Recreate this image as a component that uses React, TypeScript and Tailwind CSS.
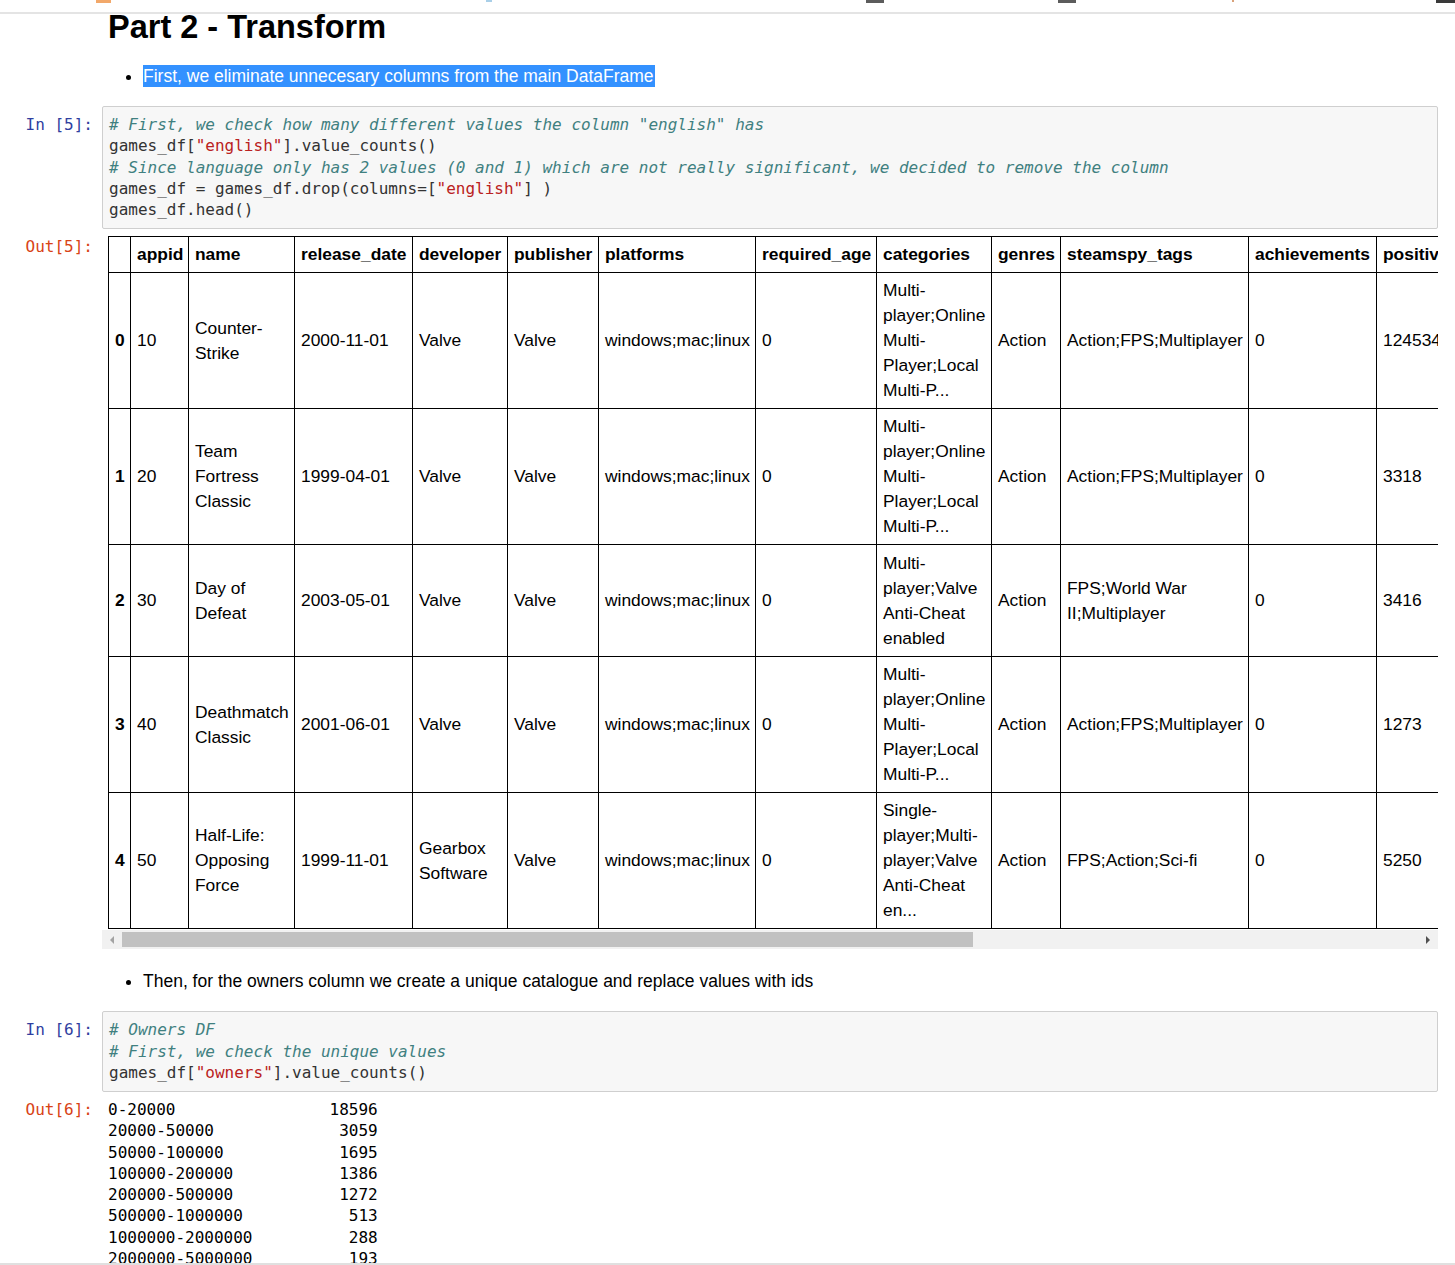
import React from "react";

const sans = "font-['Liberation_Sans',Arial,sans-serif]";
const mono = "font-['DejaVu_Sans_Mono',monospace] text-[16px] leading-[21.25px]";

type Tok = { t: string; c?: string };

const comment = "italic text-[#408080]";
const str = "text-[#ba2121]";

const cell5: Tok[][] = [
  [{ t: '# First, we check how many different values the column "english" has', c: comment }],
  [{ t: "games_df[" }, { t: '"english"', c: str }, { t: "].value_counts()" }],
  [
    {
      t: "# Since language only has 2 values (0 and 1) which are not really significant, we decided to remove the column",
      c: comment,
    },
  ],
  [{ t: "games_df = games_df.drop(columns=[" }, { t: '"english"', c: str }, { t: "] )" }],
  [{ t: "games_df.head()" }],
];

const cell6: Tok[][] = [
  [{ t: "# Owners DF", c: comment }],
  [{ t: "# First, we check the unique values", c: comment }],
  [{ t: "games_df[" }, { t: '"owners"', c: str }, { t: "].value_counts()" }],
];

const columns = [
  { label: "", w: "w-[22px]" },
  { label: "appid", w: "w-[58px]" },
  { label: "name", w: "w-[106px]" },
  { label: "release_date", w: "w-[118px]" },
  { label: "developer", w: "w-[95px]" },
  { label: "publisher", w: "w-[91px]" },
  { label: "platforms", w: "w-[157px]" },
  { label: "required_age", w: "w-[121px]" },
  { label: "categories", w: "w-[115px]" },
  { label: "genres", w: "w-[69px]" },
  { label: "steamspy_tags", w: "w-[188px]" },
  { label: "achievements", w: "w-[128px]" },
  { label: "positive_ratings", w: "w-[150px]" },
  { label: "negative_ratings", w: "w-[150px]" },
];

const onlineCats = ["Multi-", "player;Online", "Multi-", "Player;Local", "Multi-P..."];

const rows = [
  {
    idx: "0",
    h: "h-[136px]",
    cells: [
      ["10"],
      ["Counter-", "Strike"],
      ["2000-11-01"],
      ["Valve"],
      ["Valve"],
      ["windows;mac;linux"],
      ["0"],
      onlineCats,
      ["Action"],
      ["Action;FPS;Multiplayer"],
      ["0"],
      ["124534"],
      ["3339"],
    ],
  },
  {
    idx: "1",
    h: "h-[136px]",
    cells: [
      ["20"],
      ["Team", "Fortress", "Classic"],
      ["1999-04-01"],
      ["Valve"],
      ["Valve"],
      ["windows;mac;linux"],
      ["0"],
      onlineCats,
      ["Action"],
      ["Action;FPS;Multiplayer"],
      ["0"],
      ["3318"],
      ["633"],
    ],
  },
  {
    idx: "2",
    h: "h-[112px]",
    cells: [
      ["30"],
      ["Day of", "Defeat"],
      ["2003-05-01"],
      ["Valve"],
      ["Valve"],
      ["windows;mac;linux"],
      ["0"],
      ["Multi-", "player;Valve", "Anti-Cheat", "enabled"],
      ["Action"],
      ["FPS;World War", "II;Multiplayer"],
      ["0"],
      ["3416"],
      ["398"],
    ],
  },
  {
    idx: "3",
    h: "h-[136px]",
    cells: [
      ["40"],
      ["Deathmatch", "Classic"],
      ["2001-06-01"],
      ["Valve"],
      ["Valve"],
      ["windows;mac;linux"],
      ["0"],
      onlineCats,
      ["Action"],
      ["Action;FPS;Multiplayer"],
      ["0"],
      ["1273"],
      ["267"],
    ],
  },
  {
    idx: "4",
    h: "h-[136px]",
    cells: [
      ["50"],
      ["Half-Life:", "Opposing", "Force"],
      ["1999-11-01"],
      ["Gearbox", "Software"],
      ["Valve"],
      ["windows;mac;linux"],
      ["0"],
      ["Single-", "player;Multi-", "player;Valve", "Anti-Cheat", "en..."],
      ["Action"],
      ["FPS;Action;Sci-fi"],
      ["0"],
      ["5250"],
      ["288"],
    ],
  },
];

const owners = [
  ["0-20000", "18596"],
  ["20000-50000", "3059"],
  ["50000-100000", "1695"],
  ["100000-200000", "1386"],
  ["200000-500000", "1272"],
  ["500000-1000000", "513"],
  ["1000000-2000000", "288"],
  ["2000000-5000000", "193"],
  ["5000000-10000000", "46"],
  ["10000000-20000000", "21"],
];

function Prompt({ text, out }: { text: string; out?: boolean }) {
  return (
    <div
      className={`w-[102px] shrink-0 pr-[9px] text-right whitespace-pre ${mono} ${
        out ? "text-[#d84315]" : "pt-[8px] text-[#303f9f]"
      }`}
    >
      {text}
    </div>
  );
}

function CodeCell({ n, lines }: { n: number; lines: Tok[][] }) {
  return (
    <div className="flex">
      <Prompt text={`In [${n}]:`} />
      <div className="w-[1336px] rounded-[2px] border border-[#cfcfcf] bg-[#f7f7f7] px-[6px] pt-[7px] pb-[8px]">
        <pre className={`${mono} text-[#333]`}>
          {lines.map((line, i) => (
            <div key={i}>
              {line.map((tok, j) => (
                <span key={j} className={tok.c}>
                  {tok.t}
                </span>
              ))}
            </div>
          ))}
        </pre>
      </div>
    </div>
  );
}

function GamesTable() {
  return (
    <div className="flex">
      <Prompt text="Out[5]:" out />
      <div className="w-[1336px]">
        <div className="overflow-hidden pl-[6px]">
          <table
            className={`w-[1569px] table-fixed border-separate border-spacing-0 border-l border-t border-black text-[17.4px] leading-[25px] text-black ${sans}`}
          >
            <colgroup>
              {columns.map((c, i) => (
                <col key={i} className={c.w} />
              ))}
            </colgroup>
            <thead>
              <tr className="h-[36px]">
                {columns.map((c, i) => (
                  <th
                    key={i}
                    className="border-r border-b border-black px-[6px] text-left font-bold whitespace-nowrap"
                  >
                    {c.label}
                  </th>
                ))}
              </tr>
            </thead>
            <tbody>
              {rows.map((r) => (
                <tr key={r.idx} className={r.h}>
                  <th className="border-r border-b border-black px-[6px] text-left font-bold">
                    {r.idx}
                  </th>
                  {r.cells.map((lines, i) => (
                    <td
                      key={i}
                      className="border-r border-b border-black px-[6px] align-middle whitespace-nowrap"
                    >
                      {lines.map((l, j) => (
                        <div key={j}>{l}</div>
                      ))}
                    </td>
                  ))}
                </tr>
              ))}
            </tbody>
          </table>
        </div>
        {/* horizontal scrollbar */}
        <div className="mt-[1px] flex h-[19px] items-center bg-[#f1f1f1]">
          <div className="flex w-[20px] justify-center">
            <div className="h-0 w-0 border-y-[4px] border-r-[4px] border-y-transparent border-r-[#a3a3a3]" />
          </div>
          <div className="h-[15px] w-[851px] bg-[#c1c1c1]" />
          <div className="flex-1" />
          <div className="flex w-[20px] justify-center">
            <div className="h-0 w-0 border-y-[4px] border-l-[4px] border-y-transparent border-l-[#505050]" />
          </div>
        </div>
      </div>
    </div>
  );
}

export default function App() {
  return (
    <div className={`h-[1265px] w-[1455px] overflow-hidden border-b-2 border-[#e0e0e0] bg-white ${sans}`}>
      {/* bottom of the toolbar that is scrolled away */}
      <div className="flex h-[14px] items-start border-b-2 border-[#e4e4e4]">
        <div className="ml-[96px] h-[3px] w-[15px] bg-[#f2a86a]" />
        <div className="ml-[375px] h-[2px] w-[6px] bg-[#a9cfe8]" />
        <div className="ml-[374px] h-[3px] w-[18px] bg-[#5c5c5c]" />
        <div className="ml-[174px] h-[3px] w-[18px] bg-[#5c5c5c]" />
        <div className="ml-[156px] h-[2px] w-[2px] bg-[#d9a27a]" />
        <div className="ml-[202px] h-[3px] w-[19px] bg-[#3a3a3a]" />
      </div>

      <h2 className="pl-[108px] text-[32.5px] leading-[26px] font-bold text-black">Part 2 - Transform</h2>

      <ul className="mt-[25px] ml-[108px] list-disc pl-[35px] text-[17.5px] leading-[22px] text-black">
        <li>
          <span className="inline-block bg-[#3391ff] pr-[1px] text-white">
            First, we eliminate unnecesary columns from the main DataFrame
          </span>
        </li>
      </ul>

      <div className="mt-[19px]">
        <CodeCell n={5} lines={cell5} />
      </div>

      <div className="mt-[7px]">
        <GamesTable />
      </div>

      <ul className="mt-[21px] ml-[108px] list-disc pl-[35px] text-[17.5px] leading-[22px] text-black">
        <li>Then, for the owners column we create a unique catalogue and replace values with ids</li>
      </ul>

      <div className="mt-[19px]">
        <CodeCell n={6} lines={cell6} />
      </div>

      <div className="mt-[7px] flex">
        <Prompt text="Out[6]:" out />
        <pre className={`pl-[6px] text-black ${mono}`}>
          {owners.map(([k, v]) => k.padEnd(15) + v.padStart(13)).join("\n")}
        </pre>
      </div>
    </div>
  );
}
